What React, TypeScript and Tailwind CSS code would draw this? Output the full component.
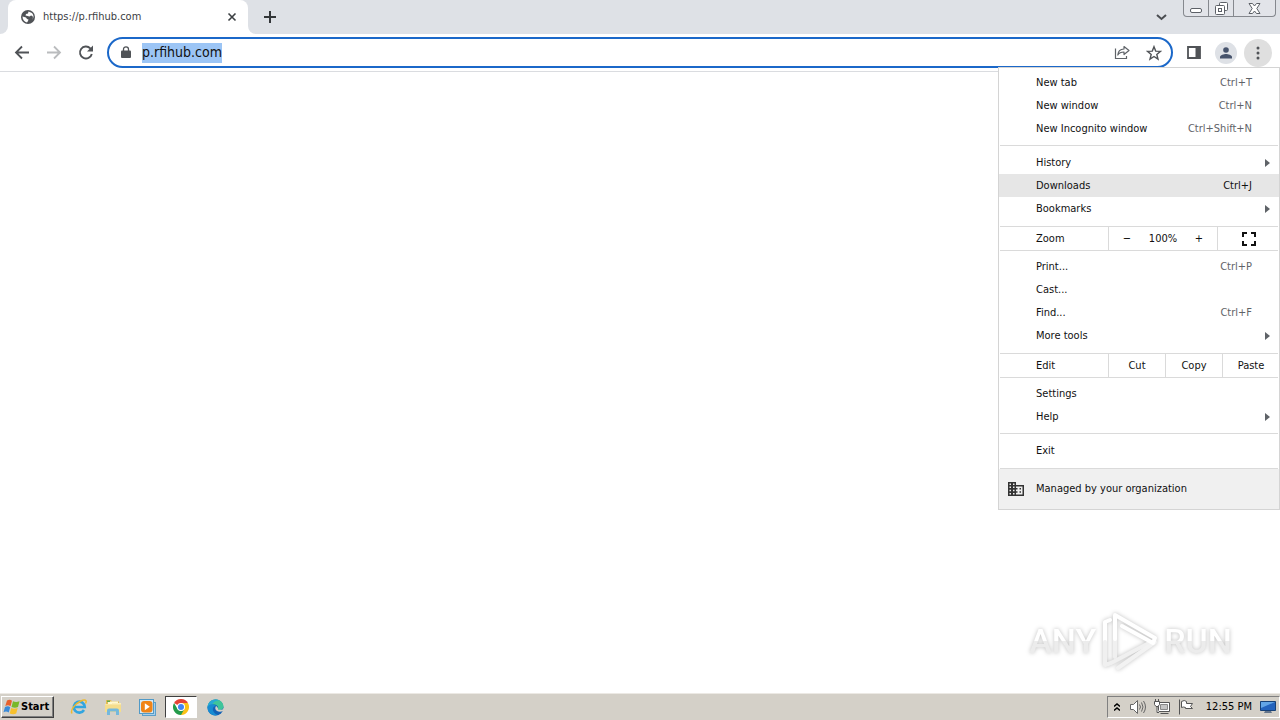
import type { ReactNode } from "react";

type Item = {
  label: string;
  shortcut?: string;
  submenu?: boolean;
  active?: boolean;
};

const tabItems: Item[] = [
  { label: "New tab", shortcut: "Ctrl+T" },
  { label: "New window", shortcut: "Ctrl+N" },
  { label: "New Incognito window", shortcut: "Ctrl+Shift+N" },
];

const historyItems: Item[] = [
  { label: "History", submenu: true },
  { label: "Downloads", shortcut: "Ctrl+J", active: true },
  { label: "Bookmarks", submenu: true },
];

const pageItems: Item[] = [
  { label: "Print...", shortcut: "Ctrl+P" },
  { label: "Cast..." },
  { label: "Find...", shortcut: "Ctrl+F" },
  { label: "More tools", submenu: true },
];

const settingsItems: Item[] = [
  { label: "Settings" },
  { label: "Help", submenu: true },
];

const MenuItem = ({ label, shortcut, submenu, active }: Item) => (
  <button
    role="menuitem"
    className={`flex h-[23px] w-full items-center pl-[37px] pr-2 text-left ${
      active ? "bg-[#e6e6e6]" : ""
    }`}
  >
    <span className="flex-1">{label}</span>
    {shortcut && (
      <span className={`mr-[19px] ${active ? "" : "text-[#5f6368]"}`}>
        {shortcut}
      </span>
    )}
    {submenu && (
      <svg width="6" height="8" viewBox="0 0 6 8" fill="#5f6368">
        <path d="M0 0l5 4-5 4z" />
      </svg>
    )}
  </button>
);

const MenuGroup = ({ items, className }: { items: Item[]; className: string }) => (
  <div className={className}>
    {items.map((item) => (
      <MenuItem key={item.label} {...item} />
    ))}
  </div>
);

const Line = () => <div className="mx-px h-px bg-[#dadada]" />;

const ChromeMenu = () => (
  <div
    role="menu"
    className="absolute top-[67px] right-0 w-[282px] border border-[#d4d4d4] bg-white text-[11px] leading-4 text-[#111]"
  >
    <MenuGroup items={tabItems} className="pt-[3px] pb-[5px]" />
    <Line />
    <MenuGroup items={historyItems} className="pt-[5px] pb-[6px]" />
    <Line />
    <div className="flex h-[23px] items-center">
      <span className="w-[109px] pl-[37px]">Zoom</span>
      <div className="flex h-full flex-1 items-center justify-between border-x border-[#dadada] px-3">
        <button aria-label="Zoom out" className="w-3">
          −
        </button>
        <span>100%</span>
        <button aria-label="Zoom in" className="w-3">
          +
        </button>
      </div>
      <button aria-label="Full screen" className="flex w-[61px] justify-center">
        <svg width="14" height="14" viewBox="0 0 14 14" fill="none" stroke="#111" strokeWidth="2">
          <path d="M1 5V1h4M9 1h4v4M13 9v4H9M5 13H1V9" />
        </svg>
      </button>
    </div>
    <Line />
    <MenuGroup items={pageItems} className="pt-1 pb-[6px]" />
    <Line />
    <div className="flex h-[23px] items-center">
      <span className="w-[109px] pl-[37px]">Edit</span>
      <button className="h-full flex-1 border-l border-[#dadada]">Cut</button>
      <button className="h-full flex-1 border-l border-[#dadada]">Copy</button>
      <button className="h-full flex-1 border-l border-[#dadada]">Paste</button>
    </div>
    <Line />
    <MenuGroup items={settingsItems} className="pt-1 pb-[5px]" />
    <Line />
    <MenuGroup items={[{ label: "Exit" }]} className="pt-[5px] pb-[6px]" />
    <Line />
    <button
      role="menuitem"
      className="flex h-10 w-full items-center gap-3 bg-[#f0f0f0] pl-[9px] text-left"
    >
      <svg width="16" height="14" viewBox="0 0 16 14">
        <path
          fill="#333"
          fillRule="evenodd"
          d="M0 0h8v3h8v11H0zM1.500 1.500V3H3V1.500zm3.500 0V3h1.500V1.500zM1.500 4.500V6H3V4.500zm3.500 0V6h1.500V4.500zM1.500 7.700v1.500H3V7.700zm3.500 0v1.500h1.500V7.700zM1.500 11v1.500H3V11zM5 11v1.500h1.500V11zM8 4.500V6h1.500v1.500H8v1.700h1.500v1.600H8v1.700h6.500v-8z"
        />
        <path fill="#333" d="M11.500 6H13v1.500h-1.500zM11.500 9.200H13v1.600h-1.500z" />
      </svg>
      <span>Managed by your organization</span>
    </button>
  </div>
);

const TabStrip = () => (
  <div className="flex h-[34px] bg-[#dee1e6] text-[#3c4043]">
    <div className="flex w-2 items-end">
      <div className="h-2 w-2 bg-white">
        <div className="h-2 w-2 rounded-br-lg bg-[#dee1e6]" />
      </div>
    </div>
    <div className="flex w-60 items-center rounded-t-lg bg-white pr-[11px] pl-[13px]">
      <svg width="14" height="14" viewBox="0 0 14 14" className="mr-2">
        <circle cx="7" cy="7" r="7" fill="#505357" />
        <path
          fill="#fff"
          d="M1.500 6.500l3.500 1 1 1.500 1.500.5-.5 1.500-1 1.500C3.500 12 1.500 9.500 1.500 6.500zM7.500 1.500l-.5 2-2 .5-.5 1.500 2 .5 2 .5 1.500-1 1.500.5.500 2-1 2c2-2 2-5 0-7z"
        />
      </svg>
      <span className="flex-1 text-[11px]">https://p.rfihub.com</span>
      <button aria-label="Close tab">
        <svg width="10" height="10" viewBox="0 0 10 10" stroke="#3c4043" strokeWidth="1.600">
          <path d="M1.500 1.500l7 7M8.500 1.500l-7 7" />
        </svg>
      </button>
    </div>
    <div className="flex w-2 items-end">
      <div className="h-2 w-2 bg-white">
        <div className="h-2 w-2 rounded-bl-lg bg-[#dee1e6]" />
      </div>
    </div>
    <button aria-label="New tab" className="ml-2">
      <svg width="12" height="12" viewBox="0 0 12 12" stroke="#333639" strokeWidth="2">
        <path d="M6 0v12M0 6h12" />
      </svg>
    </button>
    <div className="flex-1" />
    <button aria-label="Search tabs" className="mr-4">
      <svg width="12" height="12" viewBox="0 0 12 12" fill="none" stroke="#4a4d51" strokeWidth="2">
        <path d="M2 4l4.500 4L11 4" />
      </svg>
    </button>
    <div className="mr-1 flex h-[17px] rounded-b-[4px] border border-t-0 border-[#85888e] bg-[#e2e4e9]">
      <button aria-label="Minimize" className="flex w-6 items-center justify-center pt-1">
        <svg width="12" height="5" viewBox="0 0 12 5">
          <rect x=".5" y=".5" width="11" height="4" rx="1.500" fill="#fff" stroke="#5c6067" />
        </svg>
      </button>
      <button
        aria-label="Restore"
        className="flex w-[26px] items-center justify-center border-x border-[#85888e]"
      >
        <svg width="13" height="13" viewBox="0 0 13 13" fill="#fff" stroke="#5c6067">
          <rect x="4.500" y=".5" width="8" height="8" rx="1" />
          <rect x=".5" y="3.500" width="9" height="9" rx="1" />
          <rect x="3.500" y="6.500" width="3" height="3" />
        </svg>
      </button>
      <button aria-label="Close" className="flex w-[41px] items-center justify-center">
        <svg width="13" height="11" viewBox="0 0 13 11">
          <path
            d="M1 .5h3.500l2 2.500 2-2.500H12L8.800 5.500 12 10.500H8.500l-2-2.500-2 2.500H1L4.200 5.500z"
            fill="#fff"
            stroke="#5c6067"
          />
        </svg>
      </button>
    </div>
  </div>
);

const Toolbar = () => (
  <div className="flex h-[38px] items-center border-b border-[#dadce0] bg-white pr-2 pl-[14px]">
    <div className="flex w-[93px] gap-4">
      <button aria-label="Back">
        <svg width="16" height="16" viewBox="0 0 16 16" fill="none" stroke="#505357" strokeWidth="1.800">
          <path d="M15 7.500H2.500M8 1.500l-6 6 6 6" />
        </svg>
      </button>
      <button aria-label="Forward">
        <svg width="16" height="16" viewBox="0 0 16 16" fill="none" stroke="#babcbe" strokeWidth="1.800">
          <path d="M1 7.500h12.500M8 1.500l6 6-6 6" />
        </svg>
      </button>
      <button aria-label="Reload">
        <svg width="16" height="16" viewBox="0 0 16 16" fill="none" stroke="#505357" strokeWidth="1.900">
          <path d="M13.800 9A6 6 0 1 1 12.300 3.300L14 5" />
          <path d="M15 .5v6H9z" fill="#505357" stroke="none" />
        </svg>
      </button>
    </div>
    <label className="flex h-[31px] flex-1 items-center rounded-full border-2 border-[#1b68c9] px-3">
      <svg width="10" height="13" viewBox="0 0 10 13" className="mr-[11px]">
        <rect y="4.500" width="10" height="7.500" rx="1" fill="#505357" />
        <path d="M2.500 5V3.300a2.500 2.500 0 0 1 5 0V5" fill="none" stroke="#505357" strokeWidth="1.300" />
      </svg>
      {/* sized to its value so the selection colour hugs the address */}
      <input
        aria-label="Address"
        defaultValue="p.rfihub.com"
        className="h-[20px] field-sizing-content bg-[#9cc5f5] text-[14px] text-[#111] outline-none"
      />
      <span className="flex-1" />
      <button aria-label="Share this page" type="button" className="mr-4">
        <svg width="16" height="15" viewBox="0 0 16 15" fill="none" stroke="#5f6368" strokeWidth="1.200">
          <path d="M1.500 3.500v10h11V11" />
          <path d="M10 1.500l5 4-5 4V7C7 7 5 8 3.800 10 4 6.500 6.500 4.200 10 4z" strokeLinejoin="round" />
        </svg>
      </button>
      <button aria-label="Bookmark this tab" type="button" className="-mr-[3px]">
        <svg width="16" height="16" viewBox="0 0 16 16" fill="none" stroke="#505357" strokeWidth="1.400">
          <path d="M8 1.700l1.700 4.400 4.800.3-3.700 3 1.200 4.700L8 11.500l-4 2.600 1.200-4.700-3.700-3 4.800-.3z" />
        </svg>
      </button>
    </label>
    <button aria-label="Side panel" className="ml-[14px]">
      <svg width="14" height="14" viewBox="0 0 14 14">
        <path d="M1 1h12v11H1z" fill="none" stroke="#505357" strokeWidth="1.800" />
        <path d="M8.500 1H13v11H8.500z" fill="#505357" />
      </svg>
    </button>
    <button
      aria-label="Profile"
      className="ml-[14px] flex size-[22px] items-center justify-center rounded-full bg-[#dee1e6]"
    >
      <svg width="12" height="12" viewBox="0 0 12 12" fill="#46536c">
        <circle cx="6" cy="3" r="2.800" />
        <path d="M0 11.500V10c0-2 4-3 6-3s6 1 6 3v1.500z" />
      </svg>
    </button>
    <button
      aria-label="Customize and control"
      className="ml-[7px] flex size-7 items-center justify-center rounded-full bg-[#dfdfdf]"
    >
      <svg width="4" height="14" viewBox="0 0 4 14" fill="#505357">
        <circle cx="2" cy="2" r="1.500" />
        <circle cx="2" cy="7" r="1.500" />
        <circle cx="2" cy="12" r="1.500" />
      </svg>
    </button>
  </div>
);

const Watermark = () => (
  <div className="absolute right-12 bottom-5 flex items-center text-[34px] leading-[64px] font-medium drop-shadow-[0_0_2px_rgba(0,0,0,0.25)] [font-family:'Roboto',sans-serif]">
    <span className="bg-linear-to-b from-white from-50% to-[#ececec] to-50% bg-clip-text text-transparent">
      ANY
    </span>
    <svg
      width="60"
      height="64"
      viewBox="0 0 60 64"
      className="mx-1"
      fill="none"
      strokeWidth="4"
      strokeLinejoin="round"
      strokeLinecap="round"
    >
      <path d="M10 11l-5 2v20" stroke="#fff" />
      <path d="M5 33v23l6-2 38-20" stroke="#f0f0f0" />
      <path d="M15 30v18" stroke="#f0f0f0" />
      <path d="M55 33L18 59" stroke="#f2f2f2" />
      <path d="M15 30V6l40 23-2 5-31-17" stroke="#fff" />
    </svg>
    <span className="bg-linear-to-b from-white from-50% to-[#ececec] to-50% bg-clip-text text-transparent">
      RUN
    </span>
  </div>
);

const TaskIcon = ({ label, active, children }: { label: string; active?: boolean; children: ReactNode }) => (
  <button
    aria-label={label}
    className={`flex h-[22px] w-8 items-center justify-center ${
      active
        ? "border border-t-[#404040] border-r-white border-b-white border-l-[#404040] bg-white"
        : ""
    }`}
  >
    {children}
  </button>
);

const Taskbar = () => (
  <div className="flex h-[27px] items-center border-t border-[#ece9e4] bg-[#d4d0c8] pl-px">
    <button className="mr-[9px] flex h-[22px] w-[53px] items-center gap-px border border-t-white border-r-[#404040] border-b-[#404040] border-l-white pl-px text-[11px] font-bold text-black shadow-[inset_-1px_-1px_#808080]">
      <svg width="17" height="16" viewBox="0 0 17 16">
        <path d="M4 1.500c2-1 3.500-1 5 .3L7.500 7.200C6 6.200 4.500 6 2.300 7z" fill="#e8602c" />
        <path d="M10 2.300c2 1 4 1 6.500 0L15 8c-2 1-4 1-6.500 0z" fill="#79b829" />
        <path d="M2 8c2-1 3.800-1 5.200.2L5.700 13.500c-1.800-1.200-3.200-1.200-5.200-.3z" fill="#3a8ad8" />
        <path d="M8.200 9c2 1 4 1 6.500 0l-1.500 5.500c-2 1-4 1-6.500 0z" fill="#f7c02c" />
      </svg>
      Start
    </button>
    <div className="flex flex-1 gap-[2px]">
      <TaskIcon label="Internet Explorer">
        <svg width="18" height="18" viewBox="0 0 18 18" fill="none">
          <path d="M14 12a5.500 5.500 0 1 1 .8-3H5" stroke="#32a5df" strokeWidth="2.600" />
          <path d="M2 15.500C0 12 5 6 10 3.500s7.500-1.500 5.500 2" stroke="#edb92e" strokeWidth="1.500" />
        </svg>
      </TaskIcon>
      <TaskIcon label="File Explorer">
        <svg width="18" height="18" viewBox="0 0 18 18">
          <path d="M2 2h5l1 1.500h7V7H2z" fill="#e3bd55" />
          <path d="M4 3.500h10V8H4z" fill="#fff8d0" />
          <path d="M1 6h7l1-1h8v9H1z" fill="#f5dd8c" />
          <path d="M1 6h7l1-1h8v1.500H1z" fill="#fbeeb8" />
          <path d="M3 17v-4.500q0-2 2-2h8q2 0 2 2V17h-3v-3.500H6V17z" fill="#74b8dc" />
          <path d="M3 2.500h3V4H3z" fill="#65a94b" />
        </svg>
      </TaskIcon>
      <TaskIcon label="Media Player">
        <svg width="17" height="17" viewBox="0 0 17 17">
          <rect x="3.500" y="3.500" width="13" height="13" fill="#a8cfe8" stroke="#5c9fc9" />
          <rect x=".5" y=".5" width="14" height="14" fill="#d3eaf8" stroke="#519ac7" />
          <rect x="2" y="2" width="11.500" height="11.500" rx="3" fill="#f08417" />
          <path d="M5.800 4.200l5 3.500-5 3.500z" fill="#fff" />
        </svg>
      </TaskIcon>
      <TaskIcon label="Google Chrome" active>
        <svg width="16" height="16" viewBox="0 0 16 16">
          <path d="M8 8L1.070 4A8 8 0 0 1 14.930 4z" fill="#e54335" />
          <path d="M8 8V4h6.930A8 8 0 0 1 8 16z" fill="#fbc116" />
          <path d="M8 16A8 8 0 0 1 1.070 4L4.540 10 8 12l3.460-2z" fill="#249b4b" />
          <circle cx="8" cy="8" r="4" fill="#fff" />
          <circle cx="8" cy="8" r="3" fill="#4285f4" />
        </svg>
      </TaskIcon>
      <TaskIcon label="Microsoft Edge">
        <svg width="17" height="17" viewBox="0 0 17 17">
          <circle cx="8.500" cy="8.500" r="8" fill="#1361b5" />
          <path d="M.5 8C1 3.500 4.500.5 8.500.5c5 0 8 3.500 8 7 0 3-3 4-6 3 2-3-1-5-4-5-3 0-5 1.500-6 2.500z" fill="#3fc59a" />
          <path d="M.5 8C1 3.500 4.500.5 8.500.5c2 0 3 .5 4 1-4 0-7 2-7 4.500-2 0-4 1-5 2z" fill="#27a9d6" />
          <path d="M.5 8C2 4.500 7 4.500 9 7c-3 0-4 3-2.500 5.500 1 2 2.500 3 4.500 3.500-6 2-11-3-10.500-8z" fill="#188bd1" />
          <path d="M9 7c-1 1.500-1.300 3.500 1 5 2 1.200 4 .8 6.500 0L17 9c-1 2-4 2-6 1.500C11.500 9 10 7.500 9 7z" fill="#d4d0c8" />
        </svg>
      </TaskIcon>
    </div>
    <div className="flex h-[22px] items-center border border-t-[#808080] border-r-white border-b-white border-l-[#808080] pr-[3px] pl-[6px] text-[11px] text-black">
      <button aria-label="Show hidden icons" className="mr-[10px]">
        <svg width="6" height="9" viewBox="0 0 6 9" fill="none" stroke="#000" strokeWidth="1.500">
          <path d="M0 3.500l3-2.500 3 2.500M0 7.500L3 5l3 2.500" />
        </svg>
      </button>
      <svg width="16" height="16" viewBox="0 0 16 16" fill="#fff" stroke="#666" className="mr-2">
        <path d="M.5 5.500h3l4-4v13l-4-4h-3z" />
        <path d="M9.500 5.500q2 2.500 0 5M11.500 3.500q3 4.500 0 9M13.500 2q4 6 0 12" fill="none" />
      </svg>
      <svg width="16" height="16" viewBox="0 0 16 16" fill="#fff" stroke="#555" className="mr-2">
        <path d="M4.500 3.500h11v9h-11zM6.500 14.500h8" />
        <path d="M6.500 5.500h7v5h-7z" fill="#c4c4c4" stroke="#888" />
        <path d="M.5 2.500h5v3l-1.500 2H2L.5 5.500zM1.500 0v2.500M4.500 0v2.500M3 7.500v6h2" />
      </svg>
      <svg width="16" height="16" viewBox="0 0 16 16" fill="#fff" stroke="#555" className="mr-3">
        <path d="M1.500 15.500V.5M3.500 2.500q3-2 5 0v2h6l-2 3 2 2h-7v-1q-2-1-4 0z" />
      </svg>
      <time>12:55 PM</time>
      <button aria-label="Show desktop" className="ml-2">
        <svg width="16" height="14" viewBox="0 0 16 14">
          <path d="M.5 1.500h15v9H.5z" fill="#2463bd" stroke="#174177" />
          <path d="M1 2h14L1 8z" fill="#63a5e6" />
          <path d="M5 11h6l1 2H4z" fill="#64758b" />
        </svg>
      </button>
    </div>
  </div>
);

export default function App() {
  return (
    <div className="relative flex min-h-screen flex-col bg-white [font-family:'DejaVu_Sans_Condensed','Noto_Sans',sans-serif]">
      <TabStrip />
      <Toolbar />
      <main className="relative flex-1">
        <Watermark />
      </main>
      <Taskbar />
      <ChromeMenu />
    </div>
  );
}
